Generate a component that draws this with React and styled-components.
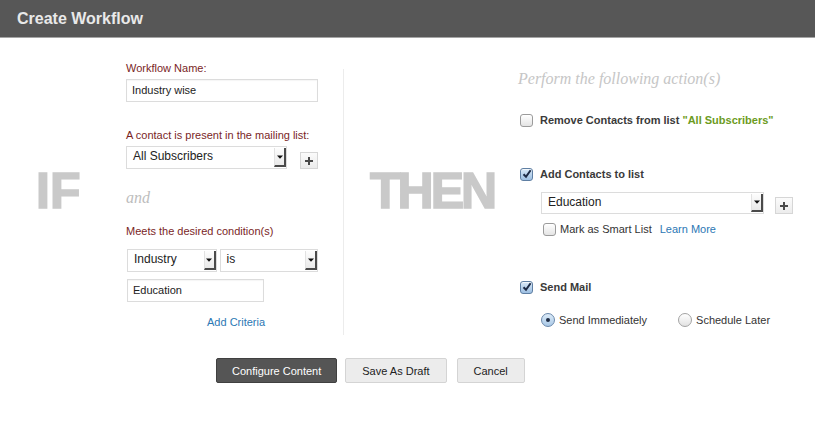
import React from 'react';
import styled, { createGlobalStyle } from 'styled-components';

const Global = createGlobalStyle`
  html, body { margin: 0; padding: 0; background: #fff; }
  body { font-family: "Liberation Sans", Arial, sans-serif; color: #333; }
  * { box-sizing: border-box; }
`;

const Page = styled.div`
  width: 815px;
  height: 422px;
  overflow: hidden;
  background: #fff;
`;

const Header = styled.header`
  height: 38px;
  background: #575757;
  border-bottom: 1px solid #a5a5a5;
  display: flex;
  align-items: center;
  padding: 1px 0 0 17px;
`;

const Title = styled.h1`
  margin: 0;
  font-size: 16px;
  font-weight: bold;
  color: #e9e9e9;
`;

const Main = styled.main`
  display: flex;
  align-items: stretch;
  padding: 23px 0 0 36px;
`;

const BigWord = styled.div`
  width: ${(p) => p.$w}px;
  margin-left: ${(p) => p.$ml || 0}px;
  align-self: center;
  margin-top: ${(p) => p.$mt || 0}px;
  font-size: 50px;
  line-height: 1;
  font-weight: bold;
  color: #c9c9c9;
  -webkit-text-stroke: 1.6px #c9c9c9;
  letter-spacing: ${(p) => p.$ls}px;
  white-space: nowrap;
`;

const Column = styled.section`
  width: ${(p) => p.$w}px;
  margin-left: ${(p) => p.$ml || 0}px;
  display: flex;
  flex-direction: column;
`;

const Divider = styled.div`
  width: 1px;
  margin: 8px 0 -6px 25px;
  background: #ececec;
`;

const Label = styled.div`
  margin-top: ${(p) => p.$mt || 0}px;
  font-size: 11px;
  line-height: 14px;
  color: #7a1f1f;
`;

const TextInput = styled.input`
  display: block;
  margin-top: ${(p) => p.$mt || 0}px;
  margin-left: ${(p) => p.$ml || 0}px;
  width: ${(p) => p.$w}px;
  height: 23px;
  padding: 0 5px 1px;
  border: 1px solid #dcdcdc;
  box-shadow: inset 0 1px 1px rgba(0,0,0,0.04);
  font-family: "Liberation Sans", Arial, sans-serif;
  font-size: 11px;
  color: #222;
  background: #fff;
  outline: none;
`;

const Row = styled.div`
  display: flex;
  align-items: ${(p) => p.$align || 'center'};
  gap: ${(p) => p.$gap || 0}px;
  margin-top: ${(p) => p.$mt || 0}px;
  padding-left: ${(p) => p.$pl || 0}px;
`;

const SelectBox = styled.div`
  width: ${(p) => p.$w}px;
  height: ${(p) => p.$h || 23}px;
  border: 1px solid #dcdcdc;
  background: #fff;
  display: flex;
  align-items: stretch;
  padding-left: 6px;
`;

const SelectText = styled.span`
  flex: 1;
  align-self: center;
  font-family: "Liberation Sans", Arial, sans-serif;
  font-size: 12px;
  color: #222;
  margin-top: -3px;
`;

const ArrowBox = styled.span`
  width: 12px;
  margin: 1px 0 1px 0;
  background: linear-gradient(#fdfdfd, #e9e9e9);
  border-left: 1px solid #e2e2e2;
  border-right: 2px solid #4a4a4a;
  border-bottom: 2px solid #4a4a4a;
  display: flex;
  align-items: center;
  justify-content: center;
`;

const PlusButton = styled.span`
  width: 18px;
  height: 17px;
  margin-left: ${(p) => p.$ml || 0}px;
  border: 1px solid #d6d6d6;
  background: linear-gradient(#fbfbfb, #ececec);
  display: flex;
  align-items: center;
  justify-content: center;
`;

const AndText = styled.div`
  margin-top: 20px;
  font-family: "Liberation Serif", Georgia, serif;
  font-style: italic;
  font-size: 16px;
  line-height: 18px;
  color: #bdbdbd;
`;

const Link = styled.a`
  font-size: 11px;
  line-height: 14px;
  color: #2c78b4;
  text-decoration: none;
  margin-left: ${(p) => p.$ml || 0}px;
`;

const LinkLine = styled.div`
  margin-top: ${(p) => p.$mt || 0}px;
  padding-left: ${(p) => p.$pl || 0}px;
  line-height: 14px;
`;

const Heading = styled.div`
  margin-top: 9px;
  font-family: "Liberation Serif", Georgia, serif;
  font-style: italic;
  font-size: 16px;
  line-height: 18px;
  color: #c6c6c6;
  white-space: nowrap;
`;

const Box = styled.span`
  width: 13px;
  height: 13px;
  flex: none;
  border-radius: 3px;
  border: 1px solid ${(p) => (p.$on ? '#5f7fa3' : '#9b9b9b')};
  background: ${(p) =>
    p.$on ? 'linear-gradient(#d8e8f7, #9dbfe2)' : 'linear-gradient(#ffffff, #e4e4e4)'};
  box-shadow: inset 0 1px 0 rgba(255,255,255,0.7);
  display: flex;
  align-items: center;
  justify-content: center;
`;

const Radio = styled.span`
  width: 14px;
  height: 14px;
  flex: none;
  margin-left: ${(p) => p.$ml || 0}px;
  border-radius: 50%;
  border: 1px solid ${(p) => (p.$on ? '#6a88ab' : '#a3a3a3')};
  background: ${(p) =>
    p.$on ? 'linear-gradient(#dcebf8, #a9c8e6)' : 'linear-gradient(#ffffff, #e2e2e2)'};
  display: flex;
  align-items: center;
  justify-content: center;
  &::after {
    content: '';
    display: ${(p) => (p.$on ? 'block' : 'none')};
    width: 4px;
    height: 4px;
    border-radius: 50%;
    background: #1e2c44;
  }
`;

const CheckText = styled.span`
  font-size: 11px;
  line-height: 14px;
  font-weight: ${(p) => (p.$bold ? 'bold' : 'normal')};
  color: ${(p) => (p.$bold ? '#3a3a3a' : '#333')};
  white-space: nowrap;
`;

const Green = styled.span`
  color: #6c9b22;
`;

const ButtonRow = styled.div`
  display: flex;
  gap: 8px;
  margin-top: 29px;
  padding-left: 216px;
`;

const Button = styled.button`
  height: 25px;
  padding: 0 ${(p) => (p.$primary ? 15 : 16)}px;
  margin-left: ${(p) => p.$ml || 0}px;
  border-radius: 2px;
  font-family: "Liberation Sans", Arial, sans-serif;
  font-size: 11px;
  cursor: pointer;
  border: 1px solid ${(p) => (p.$primary ? '#404040' : '#d4d4d4')};
  background: ${(p) => (p.$primary ? '#555555' : '#ececec')};
  color: ${(p) => (p.$primary ? '#ffffff' : '#222222')};
`;

const Arrow = () => (
  <svg width="6" height="4" viewBox="0 0 6 4">
    <path d="M0 0.5 L6 0.5 L3 3.8 Z" fill="#111" />
  </svg>
);

const Plus = () => (
  <svg width="8" height="8" viewBox="0 0 8 8">
    <path d="M3 0 H5 V3 H8 V5 H5 V8 H3 V5 H0 V3 H3 Z" fill="#4a4a4a" />
  </svg>
);

const Check = () => (
  <svg width="10" height="10" viewBox="0 0 10 10">
    <path d="M1.5 5.2 L4 7.8 L8.6 1.2" fill="none" stroke="#1d2a45" strokeWidth="2" />
  </svg>
);

const Select = ({ w, h, children }) => (
  <SelectBox $w={w} $h={h}>
    <SelectText>{children}</SelectText>
    <ArrowBox>
      <Arrow />
    </ArrowBox>
  </SelectBox>
);

const Checkbox = ({ on }) => <Box $on={on}>{on ? <Check /> : null}</Box>;

export default function App() {
  return (
    <Page>
      <Global />
      <Header>
        <Title>Create Workflow</Title>
      </Header>
      <Main>
        <BigWord $w={90} $ls={0} $mt={-8}>IF</BigWord>
        <Column $w={192}>
          <Label>Workflow Name:</Label>
          <TextInput $mt={4} $w={192} defaultValue="Industry wise" readOnly />
          <Label $mt={26}>A contact is present in the mailing list:</Label>
          <Row $mt={4} $align="flex-end">
            <Select w={162}>All Subscribers</Select>
            <PlusButton $ml={13}>
              <Plus />
            </PlusButton>
          </Row>
          <AndText>and</AndText>
          <Label $mt={17}>Meets the desired condition(s)</Label>
          <Row $mt={11} $gap={3} $pl={1}>
            <Select w={90}>Industry</Select>
            <Select w={99}>is</Select>
          </Row>
          <TextInput $mt={7} $ml={1} $w={137} defaultValue="Education" readOnly />
          <LinkLine $mt={12} $pl={81}>
            <Link href="#">Add Criteria</Link>
          </LinkLine>
        </Column>
        <Divider />
        <BigWord $w={125} $ml={26} $ls={-3} $mt={-8}>THEN</BigWord>
        <Column $w={290} $ml={23}>
          <Heading>Perform the following action(s)</Heading>
          <Row $mt={25} $gap={7} $pl={2}>
            <Checkbox />
            <CheckText $bold>
              Remove Contacts from list <Green>"All Subscribers"</Green>
            </CheckText>
          </Row>
          <Row $mt={40} $gap={7} $pl={2}>
            <Checkbox on />
            <CheckText $bold>Add Contacts to list</CheckText>
          </Row>
          <Row $mt={11} $pl={23} $align="flex-end">
            <Select w={223} h={22}>Education</Select>
            <PlusButton $ml={11}>
              <Plus />
            </PlusButton>
          </Row>
          <Row $mt={8} $gap={4} $pl={25}>
            <Checkbox />
            <CheckText>Mark as Smart List</CheckText>
            <Link href="#" $ml={4}>Learn More</Link>
          </Row>
          <Row $mt={44} $gap={7} $pl={2}>
            <Checkbox on />
            <CheckText $bold>Send Mail</CheckText>
          </Row>
          <Row $mt={19} $gap={4} $pl={23}>
            <Radio $on />
            <CheckText>Send Immediately</CheckText>
            <Radio $ml={27} />
            <CheckText>Schedule Later</CheckText>
          </Row>
        </Column>
      </Main>
      <ButtonRow>
        <Button $primary>Configure Content</Button>
        <Button>Save As Draft</Button>
        <Button $ml={2}>Cancel</Button>
      </ButtonRow>
    </Page>
  );
}
